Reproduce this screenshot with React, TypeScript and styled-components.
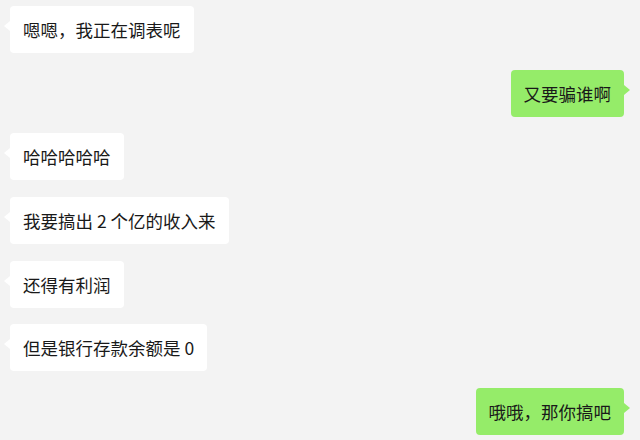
import React from 'react';
import styled, { createGlobalStyle } from 'styled-components';

const GlobalStyle = createGlobalStyle`
  html, body {
    margin: 0;
    padding: 0;
    background-color: #f3f3f3;
  }
  body {
    font-family: "Noto Sans CJK SC", "Noto Sans", sans-serif;
  }
`;

const Chat = styled.div`
  display: flex;
  flex-direction: column;
  gap: 16.67px;
  width: 640px;
  height: 440px;
  box-sizing: border-box;
  padding: 6px 16px 0 10px;
  background-color: #f3f3f3;
  overflow: hidden;
`;

const Bubble = styled.div<{ $mine?: boolean }>`
  position: relative;
  align-self: ${p => (p.$mine ? 'flex-end' : 'flex-start')};
  height: 47px;
  box-sizing: border-box;
  padding: 11px 13px;
  border-radius: 4px;
  background-color: ${p => (p.$mine ? '#95ec69' : '#ffffff')};
  color: #191919;
  font-size: 17.5px;
  line-height: 25px;
  white-space: nowrap;

  &::before {
    content: '';
    position: absolute;
    top: 15px;
    ${p => (p.$mine ? 'right: -6px;' : 'left: -6px;')}
    border-top: 5px solid transparent;
    border-bottom: 5px solid transparent;
    ${p =>
      p.$mine
        ? 'border-left: 6px solid #95ec69;'
        : 'border-right: 6px solid #ffffff;'}
  }
`;

const messages = [
  { text: '嗯嗯，我正在调表呢', mine: false },
  { text: '又要骗谁啊', mine: true },
  { text: '哈哈哈哈哈', mine: false },
  { text: '我要搞出 2 个亿的收入来', mine: false },
  { text: '还得有利润', mine: false },
  { text: '但是银行存款余额是 0', mine: false },
  { text: '哦哦，那你搞吧', mine: true },
];

const App = () => (
  <>
    <GlobalStyle />
    <Chat>
      {messages.map((m, i) => (
        <Bubble key={i} $mine={m.mine}>
          {m.text}
        </Bubble>
      ))}
    </Chat>
  </>
);

export default App;
